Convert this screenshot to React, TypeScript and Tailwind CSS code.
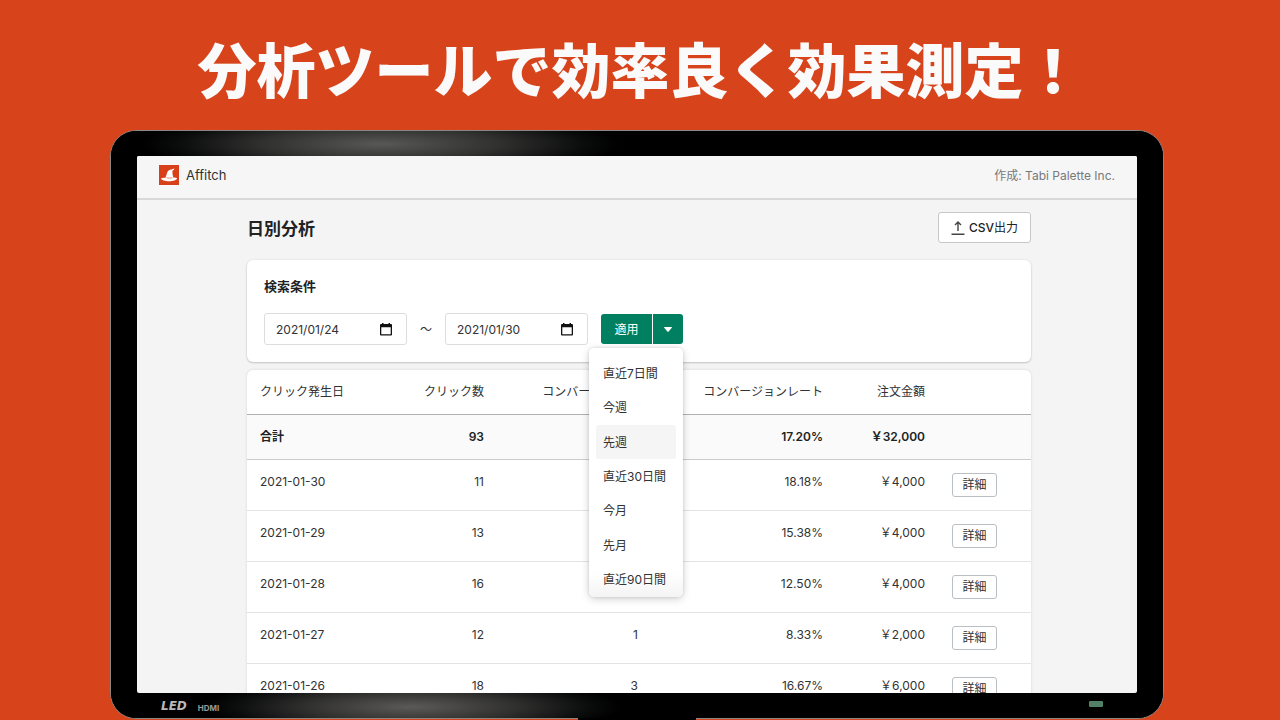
import { useState } from "react";

const periods = [
    "直近7日間",
    "今週",
    "先週",
    "直近30日間",
    "今月",
    "先月",
    "直近90日間",
];

const rows = [
    { date: "2021-01-30", clicks: 11, conversions: 2, rate: "18.18%", amount: "￥4,000" },
    { date: "2021-01-29", clicks: 13, conversions: 2, rate: "15.38%", amount: "￥4,000" },
    { date: "2021-01-28", clicks: 16, conversions: 2, rate: "12.50%", amount: "￥4,000" },
    { date: "2021-01-27", clicks: 12, conversions: 1, rate: "8.33%", amount: "￥2,000" },
    { date: "2021-01-26", clicks: 18, conversions: 3, rate: "16.67%", amount: "￥6,000" },
];

const Logo = () => (
    <svg viewBox="0 0 20 20" className="size-5" aria-hidden="true">
        <rect width="20" height="20" fill="#d8401a" />
        <path
            fill="#fff"
            d="M15.6 3.4 14.7 5 13.2 5.9 13.6 7.6 13.4 8.6 14.3 12.6C15.800 12.700 17.600 13 18.200 13.400 17.800 15 14 16.200 10 16.200S2.400 15 1.800 13.500C2.500 13 4.500 12.800 6.500 12.700L8.300 7.200C9 5.200 10.900 4.600 12.300 4.400Z"
        />
        <path
            fill="none"
            stroke="#d8401a"
            strokeWidth="0.6"
            d="M7.500 12.700C9 13.300 12 13.300 13.500 12.600"
        />
    </svg>
);

const CalendarIcon = () => (
    <svg viewBox="0 0 12 13" className="h-[13px] w-3 shrink-0" aria-hidden="true">
        <path
            fill="#111"
            fillRule="evenodd"
            d="M2 0h1.500v1h5V0H10v1h1a1 1 0 0 1 1 1v9.500a1 1 0 0 1-1 1H1a1 1 0 0 1-1-1V2a1 1 0 0 1 1-1h1ZM1.300 4.200v7h9.400v-7Z"
        />
    </svg>
);

const ExportIcon = () => (
    <svg viewBox="0 0 14 14" className="size-[14px]" fill="none" stroke="#444" strokeWidth="1.400" aria-hidden="true">
        <path d="M7 10V1M4 4l3-3 3 3M0.500 13.200h13" />
    </svg>
);

const DateField = ({ label, initial }: { label: string; initial: string }) => {
    const [value, setValue] = useState(initial);
    return (
        <label className="flex h-8 w-[143px] items-center rounded-[3px] border border-[#dcdddf] bg-white pr-[14px] pl-[11px]">
            <input
                type="text"
                aria-label={label}
                value={value}
                onChange={(e) => setValue(e.target.value)}
                className="w-full min-w-0 bg-transparent outline-none"
            />
            <CalendarIcon />
        </label>
    );
};

const PeriodMenu = () => (
    <ul className="absolute top-full right-0 z-10 mt-1 flex h-[249px] w-[94px] flex-col rounded-[5px] bg-linear-to-b from-white from-90% to-[#f4f4f4] px-[7px] pt-2 shadow-[0_0_3px_rgba(0,0,0,0.12),0_2px_8px_rgba(0,0,0,0.18)]">
        {periods.map((period) => (
            <li key={period} className="flex flex-1">
                <button
                    type="button"
                    className={
                        period === "先週"
                            ? "w-full rounded-[3px] bg-[#f5f5f5] px-[7px] text-left whitespace-nowrap"
                            : "w-full rounded-[3px] px-[7px] text-left whitespace-nowrap"
                    }
                >
                    {period}
                </button>
            </li>
        ))}
    </ul>
);

const SearchCard = () => (
    <section className="rounded-[6px] bg-white px-[17px] pt-4 pb-[17px] shadow-[0_0_3px_rgba(0,0,0,0.08),0_1px_2px_rgba(0,0,0,0.18)]">
        <h2 className="text-[13px] leading-5 font-semibold text-[#202223]">検索条件</h2>
        <div className="mt-[17px] flex items-center">
            <DateField label="開始日" initial="2021/01/24" />
            <span className="w-[38px] text-center">〜</span>
            <DateField label="終了日" initial="2021/01/30" />
            <div className="relative ml-[13px] flex gap-px">
                <button type="button" className="h-[30px] w-[51px] rounded-l-[3px] bg-[#008060] text-white">
                    適用
                </button>
                <button
                    type="button"
                    aria-label="期間を選択"
                    aria-expanded="true"
                    className="flex h-[30px] w-[30px] items-center justify-center rounded-r-[3px] bg-[#008060]"
                >
                    <svg viewBox="0 0 8 5" className="h-[5px] w-2" aria-hidden="true">
                        <path d="M0.500 0h7a.5.5 0 0 1 .3.800L4.400 4.700a.5.5 0 0 1-.8 0L.2.800A.5.5 0 0 1 .5 0Z" fill="#fff" />
                    </svg>
                </button>
                <PeriodMenu />
            </div>
        </div>
    </section>
);

const ResultTable = () => (
    <section className="mt-2 rounded-t-[6px] bg-white shadow-[0_0_3px_rgba(0,0,0,0.12)]">
        <table className="w-full table-fixed text-right whitespace-nowrap">
            <colgroup>
                <col className="w-[140px]" />
                <col className="w-[110px]" />
                <col className="w-[154px]" />
                <col className="w-[185px]" />
                <col className="w-[102px]" />
                <col className="w-[93px]" />
            </colgroup>
            <thead>
                <tr className="h-11 border-b border-[#aeb0b2]">
                    <th className="px-[13px] text-left font-normal">クリック発生日</th>
                    <th className="px-[13px] font-normal">クリック数</th>
                    <th className="px-[13px] font-normal">コンバージョン数</th>
                    <th className="px-[13px] font-normal">コンバージョンレート</th>
                    <th className="px-[13px] font-normal">注文金額</th>
                    <th aria-label="操作" />
                </tr>
            </thead>
            <tbody>
                <tr className="h-[45px] border-b border-[#c9cccf] bg-[#fafafa] font-semibold text-[#202223]">
                    <th className="px-[13px] text-left font-semibold">合計</th>
                    <td className="px-[13px]">93</td>
                    <td className="px-[13px]">16</td>
                    <td className="px-[13px]">17.20%</td>
                    <td className="px-[13px]">￥32,000</td>
                    <td />
                </tr>
                {rows.map((row) => (
                    <tr key={row.date} className="h-[51px] border-b border-[#e1e3e5] align-top">
                        <td className="px-[13px] pt-[13px] text-left">{row.date}</td>
                        <td className="px-[13px] pt-[13px]">{row.clicks}</td>
                        <td className="px-[13px] pt-[13px]">{row.conversions}</td>
                        <td className="px-[13px] pt-[13px]">{row.rate}</td>
                        <td className="px-[13px] pt-[13px]">{row.amount}</td>
                        <td className="px-[14px] pt-[13px] text-left">
                            <button
                                type="button"
                                className="block h-6 w-[45px] rounded-[3px] border border-[#babfc3] bg-white text-center"
                            >
                                詳細
                            </button>
                        </td>
                    </tr>
                ))}
            </tbody>
        </table>
    </section>
);

const Screen = () => (
    <main className="min-h-0 flex-1 overflow-hidden rounded-[2px] bg-[#f4f4f4] font-['Inter','Noto_Sans_CJK_JP',sans-serif] text-[12px] leading-[17px] text-[#303234]">
        <header className="flex h-11 items-center justify-between border-b-2 border-[#d8d8d8] bg-[#f6f6f6] px-[22px] pb-1">
            <div className="flex items-center gap-[7px]">
                <Logo />
                <span className="text-[13px]">Affitch</span>
            </div>
            <span className="text-[#77797b]">作成: Tabi Palette Inc.</span>
        </header>
        <div className="pr-[106px] pl-[110px]">
            <div className="flex items-center justify-between pt-3 pb-[17px]">
                <h1 className="pt-0.5 text-[17px] leading-6 font-semibold text-[#202223]">日別分析</h1>
                <button
                    type="button"
                    className="flex h-[31px] items-center gap-1 rounded-[3px] border border-[#c4c8cb] bg-white px-3 font-medium text-[#202223]"
                >
                    <ExportIcon />
                    <span>
                        CSV<span className="font-normal">出力</span>
                    </span>
                </button>
            </div>
            <SearchCard />
            <ResultTable />
        </div>
    </main>
);

export default function App() {
    return (
        <div className="flex h-screen flex-col overflow-hidden bg-[#d7431b]">
            <p className="flex h-[130px] shrink-0 items-center justify-center pt-[5px] text-center font-['Noto_Sans_CJK_JP',sans-serif] text-[59px] leading-none font-black whitespace-nowrap text-[#fafafa]">
                分析ツールで効率良く効果測定！
            </p>
            <div className="mr-[116px] ml-[110px] flex min-h-0 flex-1 flex-col overflow-hidden rounded-[26px] border border-[#8b8683] bg-black px-[26px]">
                <div className="-mx-[26px] h-[25px] shrink-0 bg-[radial-gradient(ellipse_240px_32px_at_270px_13px,#585856,#30302f_50%,#0a0b0b_85%,#000)]" />
                <Screen />
                <div className="-mx-[26px] flex h-[25px] shrink-0 items-center gap-[11px] bg-[radial-gradient(ellipse_210px_30px_at_300px_14px,#5c5a58,#30302f_50%,#0a0b0b_85%,#000)] pr-[60px] pl-[50px] text-[#b9b9b9]">
                    <span className="font-['DejaVu_Sans',sans-serif] text-[12px] leading-none font-bold italic">LED</span>
                    <span className="pt-1 font-['Inter',sans-serif] text-[8px] leading-none font-bold text-[#999]">HDMI</span>
                    <span className="mb-1 ml-auto h-[6px] w-[14px] rounded-[1px] bg-[#528069]" />
                </div>
            </div>
            <div className="z-10 -mt-px mr-[116px] ml-[110px] flex h-[2px] shrink-0 justify-center">
                <div className="w-[118px] bg-black" />
            </div>
        </div>
    );
}
